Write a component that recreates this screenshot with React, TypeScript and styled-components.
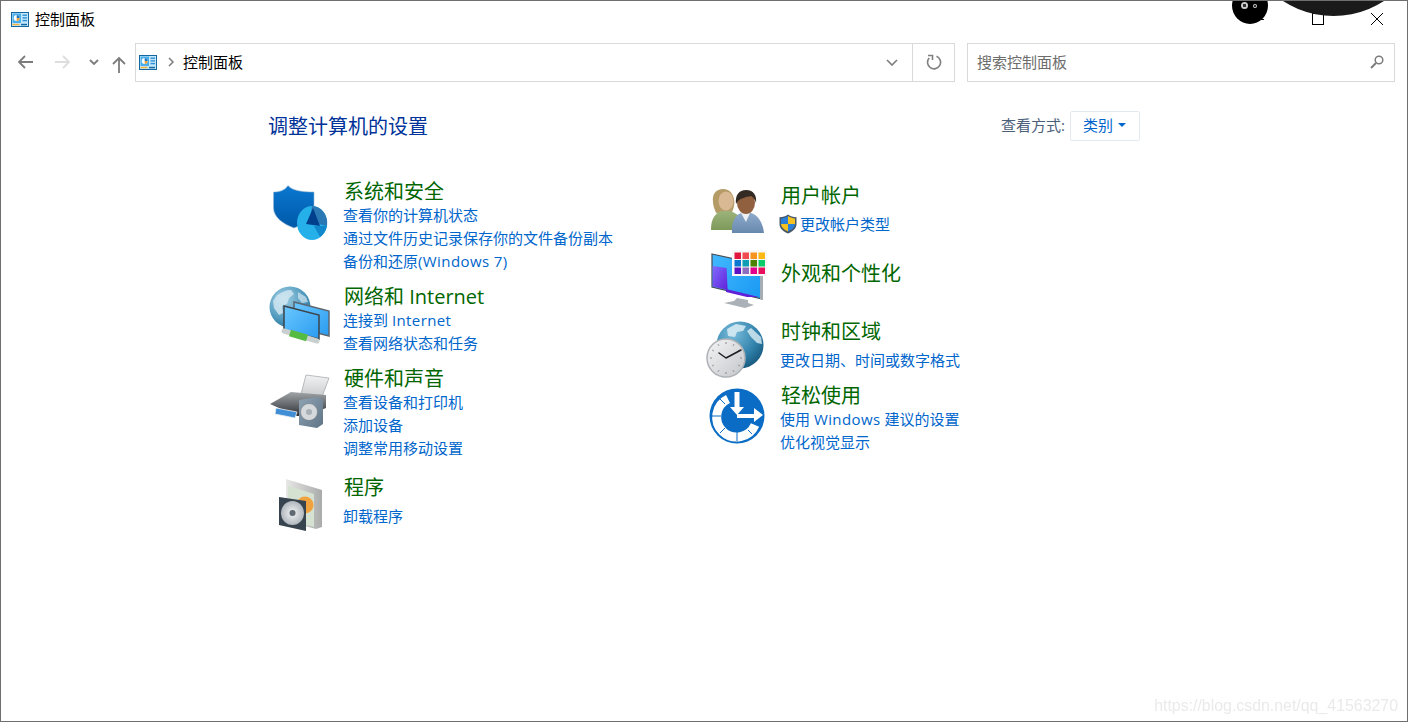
import React from "react";
import styled, { createGlobalStyle } from "styled-components";

const GlobalStyle = createGlobalStyle`
  html, body { margin: 0; padding: 0; background: #fff; }
  body { font-family: "Open Sans", "Noto Sans CJK SC", sans-serif; }
`;

function PanelIcon() {
  return (
    <svg width="18" height="15" viewBox="0 0 18 15">
      <rect x="0.5" y="0.5" width="17" height="14" fill="#c4e8fb" stroke="#14689f" />
      <rect x="1.5" y="1.5" width="8.5" height="9.5" fill="#4aaeea" />
      <circle cx="5.7" cy="6" r="3" fill="#fff" />
      <path d="M5.7 6V3A3 3 0 0 1 8.7 6Z" fill="#1f77c0" />
      <path d="M5.7 6H8.7A3 3 0 0 1 5.7 9Z" fill="#e8a33a" />
      <rect x="11.5" y="2.5" width="4.5" height="1.4" fill="#2f8fd4" />
      <rect x="11.5" y="5.2" width="4.5" height="1.4" fill="#2f8fd4" />
      <rect x="11.5" y="7.9" width="4.5" height="1.4" fill="#2f8fd4" />
      <rect x="1.5" y="11.8" width="7" height="1.5" fill="#f2b441" />
      <rect x="10" y="11.8" width="6" height="1.5" fill="#14689f" />
    </svg>
  );
}

function IconBox({ x, y, children }: { x: number; y: number; children: React.ReactNode }) {
  return (
    <IconSvg width="64" height="64" viewBox={`${x} ${y} 64 64`}>
      {children}
    </IconSvg>
  );
}

function SecurityIcon() {
  return (
    <IconBox x={268} y={181}>
      <defs>
        <linearGradient id="shieldFill" x1="0" y1="0" x2="0" y2="1">
          <stop offset="0" stopColor="#0a78d0" />
          <stop offset="1" stopColor="#0058a8" />
        </linearGradient>
      </defs>
      <path d="M273.5 192c6 0 11-1.500 14.500-6.500 4 5 14 6.500 26 6.500v16c0 9-9 16-20 20-11-4-20.500-11-20.500-20Z" fill="url(#shieldFill)" stroke="#9bb8d4" strokeWidth="0.6" />
      <ellipse cx="312" cy="223" rx="15" ry="17" fill="#26b0ea" />
      <path d="M312 206A15 17 0 0 1 327 226L310 222Z" fill="#2a78b4" />
      <path d="M313 208L306 224L320 226Z" fill="#003f8c" />
      <path d="M327 226A15 17 0 0 1 320 237L314 226Z" fill="#1188cc" />
    </IconBox>
  );
}

function NetworkIcon() {
  return (
    <IconBox x={268} y={286}>
      <defs>
        <radialGradient id="globeFill" cx="0.35" cy="0.3" r="0.85">
          <stop offset="0" stopColor="#a5d0e4" />
          <stop offset="0.6" stopColor="#4d98bd" />
          <stop offset="1" stopColor="#1b6088" />
        </radialGradient>
        <linearGradient id="screenFill" x1="0" y1="0" x2="1" y2="1">
          <stop offset="0" stopColor="#6ac8ff" />
          <stop offset="1" stopColor="#2a9bf0" />
        </linearGradient>
      </defs>
      <circle cx="290" cy="307" r="20.5" fill="url(#globeFill)" />
      <path d="M277 295c5-3 9-5 14-5l3 4-5 4-2 6-5 2 1 7-4 2-5-7-1-7Z" fill="#d4e8f2" opacity="0.8" />
      <path d="M298 292l8 5 2 5-6 1-4-5Z" fill="#d4e8f2" opacity="0.7" />
      <path d="M294 302l35 9v25l-35-9Z" fill="url(#screenFill)" stroke="#5d6670" strokeWidth="1.5" />
      <path d="M284 306l35 9v24l-35-9Z" fill="url(#screenFill)" stroke="#3c444c" strokeWidth="1.5" />
      <path d="M284 331l33 10" stroke="#c9d0cf" strokeWidth="5" strokeLinecap="round" />
      <path d="M290 333l17 5" stroke="#56bb43" strokeWidth="7" />
    </IconBox>
  );
}

function HardwareIcon() {
  return (
    <IconBox x={268} y={368}>
      <defs>
        <linearGradient id="printerFill" x1="0" y1="0" x2="0" y2="1">
          <stop offset="0" stopColor="#a2a5a8" />
          <stop offset="1" stopColor="#2e3135" />
        </linearGradient>
        <linearGradient id="speakerFill" x1="0" y1="0" x2="1" y2="1">
          <stop offset="0" stopColor="#8fa3b3" />
          <stop offset="1" stopColor="#5f7486" />
        </linearGradient>
        <linearGradient id="paperFill" x1="0" y1="0" x2="0" y2="1">
          <stop offset="0" stopColor="#f2f3f3" />
          <stop offset="1" stopColor="#c8cbcd" />
        </linearGradient>
      </defs>
      <path d="M306 375l23 3-7 19-21-3Z" fill="url(#paperFill)" stroke="#9ea3a7" strokeWidth="0.7" />
      <path d="M270 404l21-12 35 3v13l-20 8-9 0Z" fill="url(#printerFill)" />
      <path d="M276 408l21 4-2 6-20-4Z" fill="#3f8ed6" stroke="#e8eef2" strokeWidth="0.8" />
      <path d="M299 400l19-3 5 3v24l-6 4-18-3Z" fill="url(#speakerFill)" />
      <circle cx="309" cy="412" r="8.5" fill="#d5d9dc" stroke="#6d7a85" strokeWidth="0.6" />
      <circle cx="309" cy="412" r="3" fill="#a9b0b5" />
    </IconBox>
  );
}

function ProgramsIcon() {
  return (
    <IconBox x={268} y={477}>
      <defs>
        <linearGradient id="boxSide" x1="0" y1="0" x2="1" y2="0">
          <stop offset="0" stopColor="#e8e8e6" />
          <stop offset="1" stopColor="#a9abaa" />
        </linearGradient>
        <radialGradient id="discFill">
          <stop offset="0" stopColor="#8d97a0" />
          <stop offset="0.3" stopColor="#dfe3e6" />
          <stop offset="1" stopColor="#b0b7bd" />
        </radialGradient>
      </defs>
      <path d="M286 479l36 11v37l-6 2-30-8Z" fill="url(#boxSide)" />
      <path d="M288 486l26 8v33l-26-7Z" fill="#d5e2d2" />
      <circle cx="305" cy="505" r="8.5" fill="#f0a23f" />
      <path d="M279 497l27 4v30l-27-6Z" fill="#37444f" />
      <ellipse cx="292.5" cy="513" rx="11.5" ry="12" fill="url(#discFill)" />
      <circle cx="292.5" cy="513" r="3" fill="#5f6a73" />
    </IconBox>
  );
}

function UsersIcon() {
  return (
    <IconBox x={707} y={185}>
      <defs>
        <linearGradient id="shirtA" x1="0" y1="0" x2="0" y2="1">
          <stop offset="0" stopColor="#9cb27a" />
          <stop offset="1" stopColor="#7d9a5a" />
        </linearGradient>
        <linearGradient id="shirtB" x1="0" y1="0" x2="0" y2="1">
          <stop offset="0" stopColor="#8eaacb" />
          <stop offset="1" stopColor="#6788ad" />
        </linearGradient>
      </defs>
      <path d="M723 189c-7 0-11 5-10 13 0 4 2 8 3 11l16-1c2-4 3-9 2-13-1-6-5-10-11-10Z" fill="#b59c67" />
      <ellipse cx="726" cy="201" rx="7.5" ry="9.5" fill="#d9b894" />
      <path d="M711 229c0-10 4-16 11-18h9l7 4-2 15-25 0Z" fill="url(#shirtA)" />
      <path d="M732 233c-1-10 3-18 9-20h10c7 2 12 10 13 20Z" fill="url(#shirtB)" />
      <path d="M741 213l5 9 4-9Z" fill="#eef1f3" />
      <ellipse cx="746" cy="203" rx="9" ry="11" fill="#91603f" />
      <path d="M736 204c-1-9 3-14 10-14 8 0 11 6 10 13-1-4-3-6-5-7-5 1-12 2-15 8Z" fill="#332a24" />
    </IconBox>
  );
}

const swatches = ["#e3173e", "#f04a50", "#f7941d", "#fcb813", "#0a78d0", "#0f9fb4", "#4b8200", "#0acc68", "#5d10c4", "#8e6cc0", "#e3008c", "#e80f5f"];

function AppearanceIcon() {
  return (
    <IconBox x={707} y={263}>
      <defs>
        <linearGradient id="monitorFill" x1="0" y1="0" x2="1" y2="0.7">
          <stop offset="0" stopColor="#42b8ff" />
          <stop offset="1" stopColor="#1e9cf4" />
        </linearGradient>
        <linearGradient id="wedgeFill" x1="0" y1="0" x2="1" y2="1">
          <stop offset="0" stopColor="#7f6cff" />
          <stop offset="1" stopColor="#6020d8" />
        </linearGradient>
      </defs>
      <path d="M712 254l50 11v34l-50-12Z" fill="url(#monitorFill)" stroke="#454c55" strokeWidth="1.2" />
      <path d="M712.6 266l14 2 1 22-15-3.5Z" fill="url(#wedgeFill)" />
      <path d="M726 289l33 8-12 0-21-5Z" fill="#6020d8" />
      <path d="M760 266l3-1v34l-3 0Z" fill="#a6aeb5" />
      <path d="M737 298l11 2v3l6 2-9 3-21-5 10-2Z" fill="#aab2b8" />
      <rect x="732" y="250" width="35" height="26" fill="#f7f7f7" />
      {swatches.map((color, i) => (
        <rect key={color} x={734.5 + (i % 4) * 8} y={252.5 + Math.floor(i / 4) * 7.5} width="6.5" height="6.5" fill={color} />
      ))}
    </IconBox>
  );
}

function ClockIcon() {
  const ticks = Array.from({ length: 12 }, (_, i) => (i * Math.PI) / 6);
  return (
    <IconBox x={707} y={321}>
      <defs>
        <radialGradient id="earthFill" cx="0.35" cy="0.25" r="0.9">
          <stop offset="0" stopColor="#79bddc" />
          <stop offset="0.6" stopColor="#2f7fa9" />
          <stop offset="1" stopColor="#0f4a6e" />
        </radialGradient>
        <linearGradient id="clockFace" x1="0" y1="0" x2="1" y2="1">
          <stop offset="0" stopColor="#f5f5f6" />
          <stop offset="1" stopColor="#c3c6ca" />
        </linearGradient>
      </defs>
      <circle cx="740" cy="345" r="23.5" fill="url(#earthFill)" />
      <path d="M727 329l9-5 10 2-3 5-6 1-2 5-7-1Z" fill="#dcedf5" opacity="0.85" />
      <path d="M751 328l10 9 1 7-5-1-6-6-4-6Z" fill="#dcedf5" opacity="0.8" />
      <circle cx="726" cy="358" r="19" fill="url(#clockFace)" stroke="#aeb2b6" strokeWidth="1.5" />
      {ticks.map((a) => (
        <line key={a} x1={726 + Math.sin(a) * 14} y1={358 - Math.cos(a) * 14} x2={726 + Math.sin(a) * 16} y2={358 - Math.cos(a) * 16} stroke="#777" strokeWidth="0.8" />
      ))}
      <path d="M719 353l7 5 15-8" fill="none" stroke="#1d1d22" strokeWidth="1.5" strokeLinecap="round" strokeLinejoin="round" />
    </IconBox>
  );
}

function EaseIcon() {
  return (
    <IconBox x={707} y={385}>
      <circle cx="737" cy="416" r="27.5" fill="#0a6cc4" />
      <path d="M755 425a20 20 0 1 1-27-26" fill="none" stroke="#fff" strokeWidth="9" />
      <path d="M737 392v18" stroke="#fff" strokeWidth="5" />
      <path d="M730 407h14l-7 8Z" fill="#fff" />
      <path d="M737 416h19" stroke="#fff" strokeWidth="4" />
      <path d="M754 408l9 7-9 7Z" fill="#fff" />
      <path d="M712 416h9M720 399l5 5M720 433l5-5M737 441v-9M752 434l-4-4" stroke="#0a6cc4" strokeWidth="1" />
    </IconBox>
  );
}

function UacShield() {
  return (
    <svg width="18" height="20" viewBox="0 0 18 20">
      <path d="M9 .5c2.500 1.800 5 2.600 8.500 2.800v7c0 4-3.500 7.200-8.500 9.200-5-2-8.500-5.200-8.500-9.200v-7C4 3.100 6.500 2.300 9 .5Z" fill="#47576a" />
      <path d="M9 2v8H2V4.500c2.700-.3 5-1.200 7-2.500Z" fill="#2a7fd8" />
      <path d="M9 2c2 1.300 4.300 2.200 7 2.500V10H9Z" fill="#f5c21f" />
      <path d="M9 10H2c.2 3.200 3 5.800 7 7.500Z" fill="#f5c21f" />
      <path d="M9 10h7c-.2 3.200-3 5.800-7 7.500Z" fill="#2a7fd8" />
    </svg>
  );
}

type Cat = {
  title: string;
  links: string[];
  icon: React.ReactNode;
  minHeight?: number;
  spaced?: boolean;
  shield?: boolean;
};

const leftColumn: Cat[] = [
  { title: "系统和安全", links: ["查看你的计算机状态", "通过文件历史记录保存你的文件备份副本", "备份和还原(Windows 7)"], icon: <SecurityIcon /> },
  { title: "网络和 Internet", links: ["连接到 Internet", "查看网络状态和任务"], icon: <NetworkIcon /> },
  { title: "硬件和声音", links: ["查看设备和打印机", "添加设备", "调整常用移动设置"], icon: <HardwareIcon />, minHeight: 95 },
  { title: "程序", links: ["卸载程序"], icon: <ProgramsIcon />, spaced: true },
];

const rightColumn: Cat[] = [
  { title: "用户帐户", links: ["更改帐户类型"], icon: <UsersIcon />, minHeight: 64, spaced: true, shield: true },
  { title: "外观和个性化", links: [], icon: <AppearanceIcon />, minHeight: 44 },
  { title: "时钟和区域", links: ["更改日期、时间或数字格式"], icon: <ClockIcon />, spaced: true },
  { title: "轻松使用", links: ["使用 Windows 建议的设置", "优化视觉显示"], icon: <EaseIcon /> },
];

// segoe runs a bit wider than open sans at this size, so latin words get some tracking
function LinkText({ text }: { text: string }) {
  const parts = text.split(/([A-Za-z0-9()]+(?: [0-9]+\)?)?)/);
  return (
    <span>
      {parts.map((p, i) => (i % 2 ? <Latin key={i}>{p}</Latin> : p))}
    </span>
  );
}

function CategoryList({ items, iconWidth, top }: { items: Cat[]; iconWidth: number; top: number }) {
  return (
    <Column $top={top}>
      {items.map((c) => (
        <Category key={c.title} $iconWidth={iconWidth} $minHeight={c.minHeight}>
          <IconCell>{c.icon}</IconCell>
          <div>
            <CategoryTitle>{c.title}</CategoryTitle>
            <Links $spaced={c.spaced}>
              {c.links.map((l) => (
                <LinkRow key={l} $shield={c.shield}>
                  {c.shield && <UacShield />}
                  <LinkText text={l} />
                </LinkRow>
              ))}
            </Links>
          </div>
        </Category>
      ))}
    </Column>
  );
}

export default function App() {
  return (
    <Win>
      <GlobalStyle />
      <TitleBar>
        <PanelIcon />
        <WinTitle>控制面板</WinTitle>
        <WinControls>
          <WinBtn>
            <svg width="11" height="11" viewBox="0 0 11 11"><path d="M0 5.500h11" stroke="#000" /></svg>
          </WinBtn>
          <WinBtn>
            <svg width="12" height="12" viewBox="0 0 12 12"><rect x="0.5" y="0.5" width="11" height="11" fill="none" stroke="#000" /></svg>
          </WinBtn>
          <WinBtn>
            <svg width="14" height="14" viewBox="0 0 14 14"><path d="M1 1l12 12M13 1L1 13" stroke="#000" /></svg>
          </WinBtn>
        </WinControls>
      </TitleBar>

      <NavBar>
        <NavButtons>
          <NavArrow $w={16} $gap={22}>
            <svg width="16" height="14" viewBox="0 0 16 14"><path d="M16 7H2M8 1L2 7l6 6" fill="none" stroke="#7c7c7c" strokeWidth="1.8" /></svg>
          </NavArrow>
          <NavArrow $w={16} $gap={18}>
            <svg width="16" height="14" viewBox="0 0 16 14"><path d="M0 7h14M8 1l6 6-6 6" fill="none" stroke="#dedede" strokeWidth="1.8" /></svg>
          </NavArrow>
          <NavArrow $w={10} $gap={13}>
            <svg width="10" height="6" viewBox="0 0 10 6"><path d="M1 1l4 4 4-4" fill="none" stroke="#7c7c7c" strokeWidth="1.8" /></svg>
          </NavArrow>
          <NavArrow $w={14} $gap={0} $down={4}>
            <svg width="14" height="17" viewBox="0 0 14 17"><path d="M7 17V2M1 8l6-6 6 6" fill="none" stroke="#7c7c7c" strokeWidth="1.8" /></svg>
          </NavArrow>
        </NavButtons>
        <AddressBox>
          <PanelIcon />
          <svg width="7" height="10" viewBox="0 0 7 10"><path d="M1 1l4 4-4 4" fill="none" stroke="#7c7c7c" strokeWidth="1.5" /></svg>
          <Crumb>控制面板</Crumb>
          <svg width="12" height="7" viewBox="0 0 12 7"><path d="M1 1l5 5 5-5" fill="none" stroke="#7c7c7c" strokeWidth="1.6" /></svg>
          <RefreshCell>
            <svg width="16" height="16" viewBox="0 0 16 16">
              <path d="M10.5 2.300A6.500 6.500 0 1 1 3.200 4" fill="none" stroke="#808080" strokeWidth="1.6" />
              <path d="M2 1.500h4.500V6" fill="none" stroke="#808080" strokeWidth="1.6" />
            </svg>
          </RefreshCell>
        </AddressBox>
        <SearchBox>
          <SearchHint>搜索控制面板</SearchHint>
          <svg width="14" height="14" viewBox="0 0 14 14">
            <circle cx="9" cy="5" r="3.800" fill="none" stroke="#7c7c7c" strokeWidth="1.5" />
            <path d="M6 8l-5 5" stroke="#7c7c7c" strokeWidth="2" />
          </svg>
        </SearchBox>
      </NavBar>

      <Content>
        <Header>
          <Heading>调整计算机的设置</Heading>
          <ViewBy>
            <ViewLabel>查看方式:</ViewLabel>
            <ViewButton>
              类别
              <Caret />
            </ViewButton>
          </ViewBy>
        </Header>
        <Columns>
          <CategoryList items={leftColumn} iconWidth={75} top={40} />
          <CategoryList items={rightColumn} iconWidth={73} top={44} />
        </Columns>
      </Content>

      <BlobSmall>
        <Eye $x={9} $y={15} $r={3.5} />
        <Eye $x={21} $y={17} $r={2} />
      </BlobSmall>
      <BlobLarge />
      <Watermark>https://blog.csdn.net/qq_41563270</Watermark>
    </Win>
  );
}

const Win = styled.div`
  position: relative;
  box-sizing: border-box;
  width: 1408px;
  height: 722px;
  border: 1px solid #6f6f6f;
  background: #fff;
  overflow: hidden;
`;

const TitleBar = styled.div`
  display: flex;
  align-items: center;
  height: 36px;
  padding-left: 10px;
`;

const WinTitle = styled.span`
  margin-left: 6px;
  padding-bottom: 2px;
  font-size: 15px;
  color: #000;
`;

const WinControls = styled.div`
  display: flex;
  margin-left: auto;
  padding-right: 1px;
`;

const WinBtn = styled.div`
  display: flex;
  align-items: center;
  justify-content: center;
  width: 59px;
  height: 36px;
`;

const NavBar = styled.div`
  display: flex;
  align-items: center;
  height: 44px;
  padding: 3px 12px 0 16px;
`;

const NavButtons = styled.div`
  display: flex;
  align-items: center;
  width: 118px;
`;

const NavArrow = styled.div<{ $w: number; $gap: number; $down?: number }>`
  display: flex;
  justify-content: center;
  width: ${(p) => p.$w}px;
  margin-right: ${(p) => p.$gap}px;
  margin-top: ${(p) => p.$down ?? 0}px;
`;

const AddressBox = styled.div`
  display: flex;
  align-items: center;
  box-sizing: border-box;
  width: 820px;
  height: 39px;
  padding-left: 3px;
  border: 1px solid #d9d9d9;
  & > svg:nth-child(2) {
    margin-left: 11px;
  }
`;

const Crumb = styled.span`
  flex: 1;
  margin-left: 8px;
  padding-bottom: 2px;
  font-size: 15px;
  color: #000;
`;

const RefreshCell = styled.div`
  display: flex;
  align-items: center;
  justify-content: center;
  width: 41px;
  height: 100%;
  margin-left: 14px;
  border-left: 1px solid #d9d9d9;
`;

const SearchBox = styled.div`
  display: flex;
  align-items: center;
  justify-content: space-between;
  box-sizing: border-box;
  width: 428px;
  height: 39px;
  margin-left: 12px;
  padding: 0 10px 0 9px;
  border: 1px solid #d9d9d9;
`;

const SearchHint = styled.span`
  padding-bottom: 2px;
  font-size: 15px;
  color: #6d6d6d;
`;

const Content = styled.main`
  width: 872px;
  margin-left: 267px;
`;

const Header = styled.div`
  display: flex;
  align-items: center;
  justify-content: space-between;
  height: 30px;
  margin-top: 27px;
`;

const Heading = styled.h1`
  margin: 0;
  padding-top: 2px;
  font-size: 20px;
  font-weight: 400;
  line-height: 26px;
  color: #003399;
`;

const ViewBy = styled.div`
  display: flex;
  align-items: center;
`;

const ViewLabel = styled.span`
  padding-bottom: 4px;
  font-size: 15px;
  color: #4c607a;
`;

const ViewButton = styled.div`
  display: flex;
  align-items: center;
  box-sizing: border-box;
  width: 70px;
  height: 30px;
  margin-left: 5px;
  padding: 0 0 4px 12px;
  border: 1px solid #e3e9f1;
  border-radius: 2px;
  font-size: 15px;
  color: #0066cc;
`;

const Caret = styled.span`
  width: 0;
  height: 0;
  margin: 2px 0 0 5px;
  border-left: 4px solid transparent;
  border-right: 4px solid transparent;
  border-top: 4px solid #0066cc;
`;

const Columns = styled.div`
  display: grid;
  grid-template-columns: 439px 1fr;
`;

const Column = styled.div<{ $top: number }>`
  display: flex;
  flex-direction: column;
  gap: 14px;
  padding-top: ${(p) => p.$top}px;
`;

const Category = styled.section<{ $iconWidth: number; $minHeight?: number }>`
  display: grid;
  grid-template-columns: ${(p) => p.$iconWidth}px 1fr;
  min-height: ${(p) => p.$minHeight ?? 0}px;
`;

const IconCell = styled.div`
  height: 0;
`;

const IconSvg = styled.svg`
  display: block;
  overflow: visible;
`;

const CategoryTitle = styled.h2`
  margin: 0 0 0 1px;
  font-size: 20px;
  font-weight: 400;
  line-height: 22px;
  color: #006600;
`;

const Links = styled.div<{ $spaced?: boolean }>`
  margin-top: ${(p) => (p.$spaced ? 5 : 0)}px;
`;

const LinkRow = styled.a<{ $shield?: boolean }>`
  display: flex;
  align-items: center;
  gap: 3px;
  height: 23px;
  margin-left: ${(p) => (p.$shield ? -1 : 0)}px;
  font-size: 15px;
  color: #0066cc;
`;

const Latin = styled.span`
  letter-spacing: 0.4px;
`;

const BlobSmall = styled.div`
  position: absolute;
  left: 1231px;
  top: -14px;
  width: 36px;
  height: 37px;
  border-radius: 50%;
  background: #000;
`;

const Eye = styled.span<{ $x: number; $y: number; $r: number }>`
  position: absolute;
  left: ${(p) => p.$x}px;
  top: ${(p) => p.$y}px;
  width: ${(p) => p.$r * 2}px;
  height: ${(p) => p.$r * 2}px;
  border-radius: 50%;
  background: radial-gradient(circle, #333 35%, #ccc 40%);
`;

const BlobLarge = styled.div`
  position: absolute;
  left: 1240px;
  top: -170px;
  width: 185px;
  height: 185px;
  border-radius: 50%;
  background: #1a1a1a;
`;

const Watermark = styled.div`
  position: absolute;
  right: 9px;
  bottom: 6px;
  font-family: "Liberation Sans", sans-serif;
  font-size: 15.9px;
  color: #eaeaea;
  filter: blur(0.4px);
`;
